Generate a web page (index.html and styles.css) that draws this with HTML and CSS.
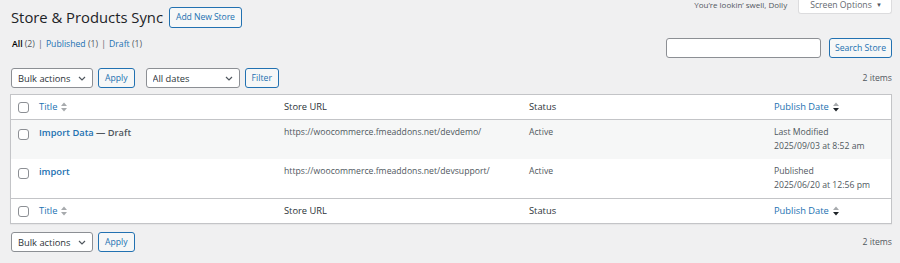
FILE: index.html
```html
<!DOCTYPE html>
<html lang="en">
<head>
  <meta charset="UTF-8">
  <meta name="viewport" content="width=device-width, initial-scale=1.0">
  <title>Store &amp; Products Sync</title>
  <link rel="stylesheet" href="styles.css">
</head>
<body>
  <div class="wrap">
    <div class="page-head">
      <div class="title-row">
        <h1>Store &amp; Products Sync</h1>
        <a class="page-title-action" href="#">Add New Store</a>
      </div>
      <div class="screen-meta">
        <p class="dolly">You’re lookin’ swell, Dolly</p>
        <button class="screen-options">Screen Options <span class="caret">▼</span></button>
      </div>
    </div>

    <div class="subnav">
      <ul class="subsubsub">
        <li><a class="current" href="#">All <span class="count">(2)</span></a> |</li>
        <li><a href="#">Published <span class="count">(1)</span></a> |</li>
        <li><a href="#">Draft <span class="count">(1)</span></a></li>
      </ul>
      <div class="search-box">
        <input type="search" class="search-input">
        <button class="button">Search Store</button>
      </div>
    </div>

    <div class="tablenav top">
      <select class="select bulk"><option>Bulk actions</option></select>
      <button class="button">Apply</button>
      <select class="select dates"><option>All dates</option></select>
      <button class="button">Filter</button>
      <span class="displaying-num">2 items</span>
    </div>

    <table class="list-table">
      <colgroup>
        <col class="col-cb">
        <col class="col-title">
        <col class="col-url">
        <col class="col-status">
        <col>
      </colgroup>
      <thead>
        <tr>
          <th class="check-column"><input type="checkbox" class="cb"></th>
          <th class="sortable"><a href="#">Title <svg class="sort-icon" width="6" height="10" viewBox="0 0 6 10"><polygon points="0,4 3,0.5 6,4" fill="#a7aaad"/><polygon points="0,6 6,6 3,9.5" fill="#a7aaad"/></svg></a></th>
          <th>Store URL</th>
          <th>Status</th>
          <th class="sortable"><a href="#">Publish Date <svg class="sort-icon" width="6" height="10" viewBox="0 0 6 10"><polygon points="0,4 3,0.5 6,4" fill="#a7aaad"/><polygon points="0,6 6,6 3,9.5" fill="#1d2327"/></svg></a></th>
        </tr>
      </thead>
      <tbody>
        <tr class="alt">
          <td class="check-column"><input type="checkbox" class="cb"></td>
          <td><a class="row-title" href="#">Import Data</a> <span class="post-state">— Draft</span></td>
          <td>https://woocommerce.fmeaddons.net/devdemo/</td>
          <td>Active</td>
          <td>Last Modified<br>2025/09/03 at 8:52 am</td>
        </tr>
        <tr>
          <td class="check-column"><input type="checkbox" class="cb"></td>
          <td><a class="row-title" href="#">import</a></td>
          <td>https://woocommerce.fmeaddons.net/devsupport/</td>
          <td>Active</td>
          <td>Published<br>2025/06/20 at 12:56 pm</td>
        </tr>
      </tbody>
      <tfoot>
        <tr>
          <th class="check-column"><input type="checkbox" class="cb"></th>
          <th class="sortable"><a href="#">Title <svg class="sort-icon" width="6" height="10" viewBox="0 0 6 10"><polygon points="0,4 3,0.5 6,4" fill="#a7aaad"/><polygon points="0,6 6,6 3,9.5" fill="#a7aaad"/></svg></a></th>
          <th>Store URL</th>
          <th>Status</th>
          <th class="sortable"><a href="#">Publish Date <svg class="sort-icon" width="6" height="10" viewBox="0 0 6 10"><polygon points="0,4 3,0.5 6,4" fill="#a7aaad"/><polygon points="0,6 6,6 3,9.5" fill="#1d2327"/></svg></a></th>
        </tr>
      </tfoot>
    </table>

    <div class="tablenav bottom">
      <select class="select bulk"><option>Bulk actions</option></select>
      <button class="button">Apply</button>
      <span class="displaying-num">2 items</span>
    </div>
  </div>
</body>
</html>
```

FILE: styles.css
```css
html {
  background: #f0f0f1;
}

body {
  margin: 0;
  font-family: "Open Sans", "Noto Sans", sans-serif;
  font-size: 8.67px;
  line-height: 1.4;
  color: #3c434a;
  background: #f0f0f1;
}

a {
  color: #2271b1;
  text-decoration: none;
}

.wrap {
  padding: 0 8px 0 10px;
}

/* header */
.page-head {
  display: grid;
  grid-template-columns: 1fr auto;
  align-items: start;
}

.title-row {
  display: flex;
  align-items: center;
  gap: 6px;
  padding-top: 7px;
}

h1 {
  margin: 0;
  padding-left: 1px;
  font-size: 14.8px;
  font-weight: 400;
  line-height: 21px;
  color: #1d2327;
}

.page-title-action {
  display: inline-block;
  padding: 0 6px;
  border: 1px solid #2271b1;
  border-radius: 3px;
  background: #f6f7f7;
  font-weight: 500;
  letter-spacing: -0.1px;
  line-height: 19px;
}

.screen-meta {
  display: flex;
  align-items: flex-start;
  gap: 11px;
}

.dolly {
  margin: 0;
  font-size: 8px;
  line-height: 10px;
  color: #50575e;
}

.screen-options {
  height: 14px;
  padding: 0 9px 3px 11px;
  border: 1px solid #dcdcde;
  border-top: none;
  border-radius: 0 0 3px 3px;
  background: #fff;
  font-family: inherit;
  font-size: 8.67px;
  line-height: 10px;
  color: #646970;
}

.caret {
  font-size: 6px;
  color: #50575e;
  margin-left: 2px;
  vertical-align: 1px;
}

/* views + search */
.subnav {
  display: flex;
  justify-content: space-between;
  align-items: flex-start;
  margin-top: 10px;
}

.subsubsub {
  display: flex;
  gap: 3px;
  margin: 0;
  padding: 0 0 0 2px;
  list-style: none;
  line-height: 13px;
  color: #646970;
}

.subsubsub a {
  margin-right: 1px;
}

.subsubsub a.current {
  font-weight: 600;
  color: #000;
}

.count {
  font-weight: 400;
  color: #50575e;
}

.search-box {
  display: flex;
  gap: 8px;
}

.search-input {
  width: 155px;
  height: 20px;
  box-sizing: border-box;
  margin: 0;
  border: 1px solid #8c8f94;
  border-radius: 3px;
  background: #fff;
}

.button {
  height: 20px;
  box-sizing: border-box;
  margin: 0;
  padding: 0 6px;
  border: 1px solid #2271b1;
  border-radius: 3px;
  background: #f6f7f7;
  font-family: inherit;
  font-size: 8.67px;
  color: #2271b1;
}

.search-box .button {
  padding: 0 5px;
}

/* tablenav */
.tablenav {
  display: flex;
  align-items: center;
  height: 20px;
}

.tablenav.top {
  margin: 10px 0 6px;
}

.tablenav.bottom {
  margin-top: 8px;
}

.tablenav .button {
  margin-left: 5px;
}

.tablenav .dates {
  margin-left: 11px;
}

.select {
  height: 20px;
  box-sizing: border-box;
  margin: 0 0 0 1px;
  padding: 0 18px 0 6px;
  border: 1px solid #8c8f94;
  border-radius: 3px;
  background: #fff url("data:image/svg+xml;utf8,<svg xmlns='http://www.w3.org/2000/svg' width='8' height='5' viewBox='0 0 8 5'><path d='M1 1l3 3 3-3' fill='none' stroke='%2350575e' stroke-width='1.2'/></svg>") no-repeat right 6px center;
  font-family: inherit;
  font-size: 9.33px;
  color: #2c3338;
  appearance: none;
}

.select.bulk {
  width: 82px;
}

.select.dates {
  width: 94px;
}

.displaying-num {
  margin-left: auto;
  color: #50575e;
}

/* table */
.list-table {
  width: 100%;
  table-layout: fixed;
  border-spacing: 0;
  border: 1px solid #c3c4c7;
  background: #fff;
  box-shadow: 0 1px 1px rgba(0, 0, 0, 0.04);
}

.col-cb {
  width: 21px;
}

.col-title,
.col-url,
.col-status {
  width: 245px;
}

.list-table th {
  padding: 4px 7px;
  font-size: 9.33px;
  font-weight: 400;
  line-height: 16px;
  text-align: left;
  color: #2c3338;
}

.list-table thead th {
  border-bottom: 1px solid #c3c4c7;
}

.list-table tfoot th {
  border-top: 1px solid #c3c4c7;
}

.list-table td {
  padding: 6px 7px;
  line-height: 13.5px;
  vertical-align: top;
  color: #50575e;
}

.list-table tr.alt td {
  background: #f6f7f7;
}

.list-table .check-column {
  padding: 0 0 0 7px;
  vertical-align: middle;
}

.list-table td.check-column {
  padding-top: 9px;
  vertical-align: top;
}

.cb {
  display: block;
  width: 11px;
  height: 11px;
  margin: 0;
  border: 1px solid #8c8f94;
  border-radius: 3px;
  background: #fff;
  appearance: none;
}

.sortable a {
  display: inline-flex;
  align-items: center;
  gap: 4px;
}

.sort-icon {
  display: block;
}

.row-title {
  font-size: 9.33px;
  font-weight: 600;
}

.post-state {
  font-size: 9.33px;
  font-weight: 600;
  color: #50575e;
}
```
